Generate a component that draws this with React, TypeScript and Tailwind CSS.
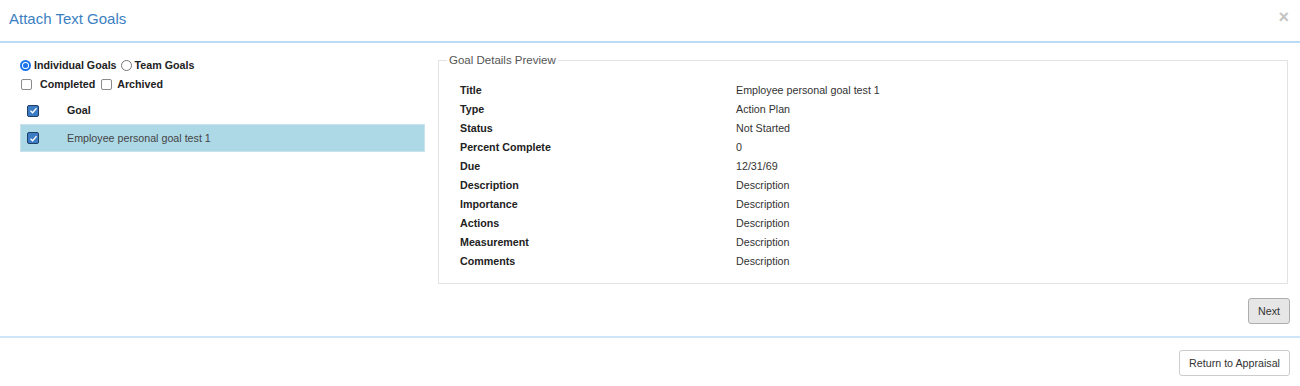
import React from "react";

const details: [string, string][] = [
  ["Title", "Employee personal goal test 1"],
  ["Type", "Action Plan"],
  ["Status", "Not Started"],
  ["Percent Complete", "0"],
  ["Due", "12/31/69"],
  ["Description", "Description"],
  ["Importance", "Description"],
  ["Actions", "Description"],
  ["Measurement", "Description"],
  ["Comments", "Description"],
];

const CheckedBox = () => (
  <span className="inline-flex items-center justify-center w-[12px] h-[12px] rounded-[2px] bg-[#3b7cc4] border border-[#1f3f66]">
    <svg viewBox="0 0 12 12" className="w-[9px] h-[9px]">
      <path d="M2 6.2 L4.8 9 L10 3" fill="none" stroke="white" strokeWidth="1.8" />
    </svg>
  </span>
);

const EmptyBox = () => (
  <span className="inline-block w-[11px] h-[11px] rounded-[2px] border border-[#8a8a8a] bg-white" />
);

const Radio = ({ on }: { on?: boolean }) =>
  on ? (
    <span className="inline-flex items-center justify-center w-[11px] h-[11px] rounded-full border-2 border-[#1a73e8] bg-white">
      <span className="w-[5px] h-[5px] rounded-full bg-[#1a73e8]" />
    </span>
  ) : (
    <span className="inline-block w-[11px] h-[11px] rounded-full border border-[#767676] bg-white" />
  );

export default function App() {
  return (
    <div className="w-[1300px] h-[386px] bg-white text-[10.7px] text-[#333] font-['Liberation_Sans',Arial,sans-serif]">
      {/* header */}
      <div className="h-[43px] flex items-center justify-between pl-[9px] pr-[11px] border-b-2 border-[#b9dbf5]">
        <h4 className="text-[15px] text-[#3c7fc1] mt-[-2px]">Attach Text Goals</h4>
        <span className="text-[18px] font-bold text-[#c4c4c4] leading-none mt-[-8px]">×</span>
      </div>

      {/* body */}
      <div className="flex pl-[20px] pr-[12px] pt-[12px] h-[295px] border-b-2 border-[#cfe6f8]">
        <div className="w-[405px]">
          <div className="flex items-center gap-[3px] h-[16px] mt-[2px] font-bold text-[#222]">
            <Radio on />
            <span className="mr-[1px]">Individual Goals</span>
            <Radio />
            <span>Team Goals</span>
          </div>
          <div className="flex items-center h-[16px] mt-[3px] font-bold text-[#222]">
            <span className="ml-[1px] flex">
              <EmptyBox />
            </span>
            <span className="ml-[8px] mr-[6px]">Completed</span>
            <EmptyBox />
            <span className="ml-[5px]">Archived</span>
          </div>
          <div className="flex items-center h-[27px] mt-[5px] font-bold text-[#222]">
            <span className="w-[47px] pl-[7px] flex">
              <CheckedBox />
            </span>
            <span>Goal</span>
          </div>
          <div className="flex items-center h-[28px] bg-[#add8e6] border border-[#c9e3ec]">
            <span className="w-[46px] pl-[6px] flex">
              <CheckedBox />
            </span>
            <span className="text-[#444]">Employee personal goal test 1</span>
          </div>
        </div>

        <div className="flex-1 ml-[13px] flex flex-col">
          <fieldset className="border border-[#e3e3e3] h-[232px] mt-[-3px] pl-[21px] pt-[4px]">
            <legend className="text-[11.5px] text-[#555] ml-[-13px] px-[2px]">Goal Details Preview</legend>
            <div className="grid grid-cols-[276px_1fr] mt-[9px]">
              {details.map(([k, v]) => (
                <React.Fragment key={k}>
                  <div className="h-[19px] font-bold text-[#222]">{k}</div>
                  <div className="h-[19px]">{v}</div>
                </React.Fragment>
              ))}
            </div>
          </fieldset>
          <div className="flex justify-end mt-[14px]">
            <button className="h-[26px] px-[9px] text-[10.7px] text-[#333] bg-[#e6e6e6] border border-[#adadad] rounded-[3px] mr-[-2px]">
              Next
            </button>
          </div>
        </div>
      </div>

      {/* footer */}
      <div className="flex justify-end pr-[10px] pt-[12px]">
        <button className="h-[26px] px-[9px] text-[10.7px] text-[#333] bg-white border border-[#ccc] rounded-[3px]">
          Return to Appraisal
        </button>
      </div>
    </div>
  );
}
